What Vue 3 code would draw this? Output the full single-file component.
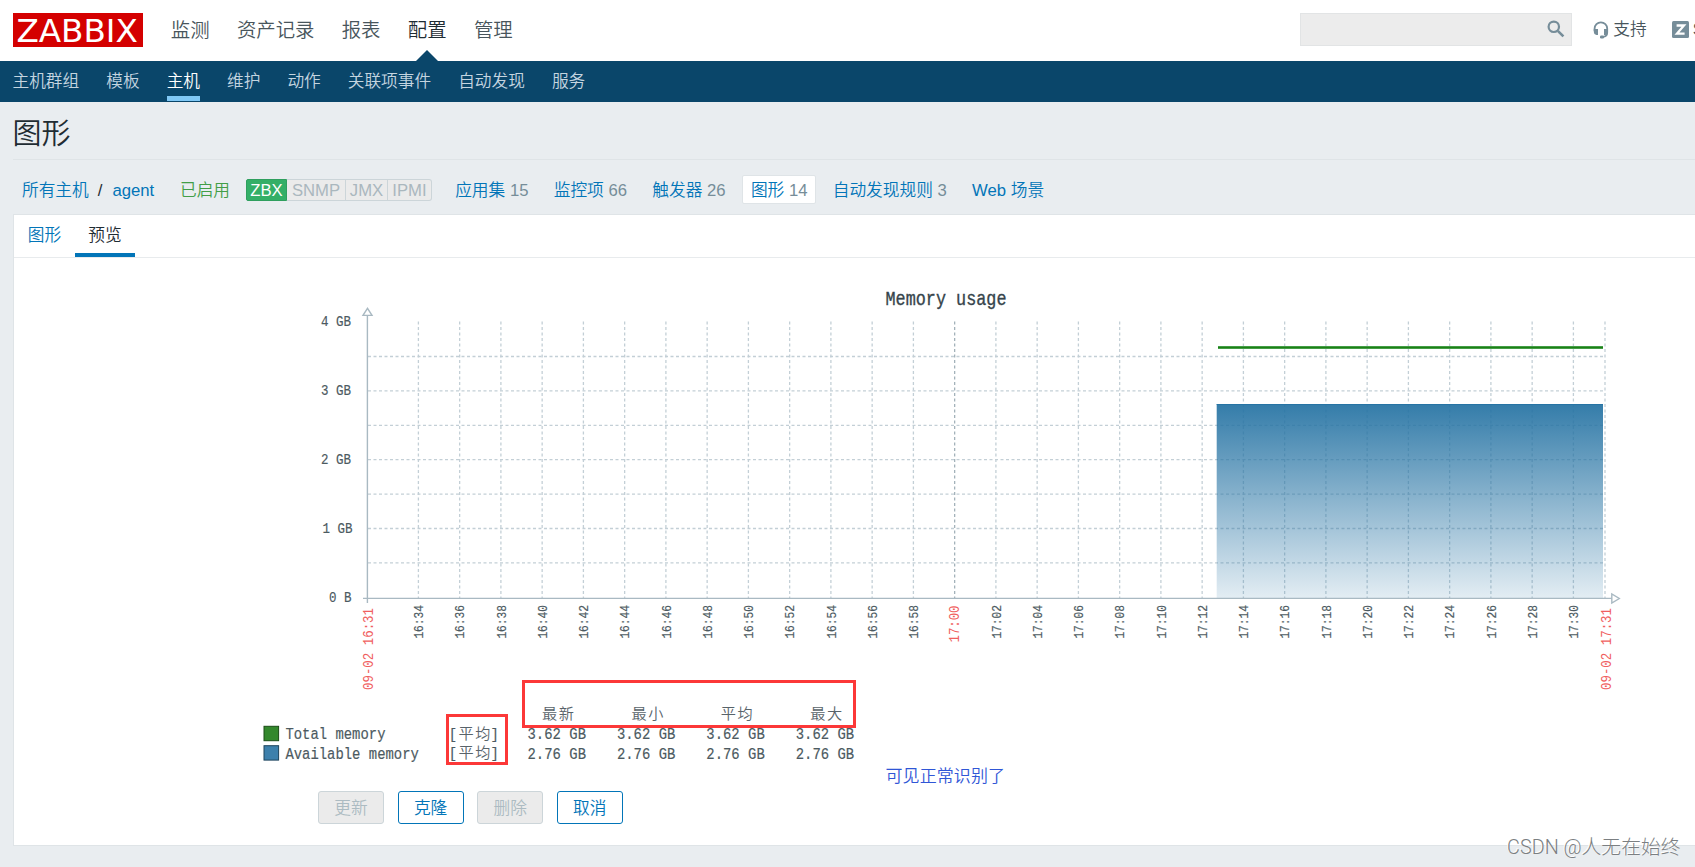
<template>
  <div class="page">
    <header class="header">
      <div class="logo">
        <svg width="130" height="34" viewBox="0 0 130 34">
          <text x="3.4" y="28.8" textLength="121.4" lengthAdjust="spacingAndGlyphs" class="logo-text">ZABBIX</text>
        </svg>
      </div>
      <nav class="main-nav">
        <a v-for="item in mainMenu" :key="item" :class="{ active: item === '配置' }">{{ item }}</a>
      </nav>
      <div class="search">
        <svg width="18" height="18" viewBox="0 0 18 18">
          <circle cx="6.8" cy="6.8" r="5.2" fill="none" stroke="#768d99" stroke-width="2.2" />
          <path d="M10.8 10.8 L16.4 16.4" stroke="#768d99" stroke-width="2.6" />
        </svg>
      </div>
      <a class="support">
        <svg width="16" height="18" viewBox="0 0 16 18">
          <path d="M1.6 10 V7.6 A6.1 6.1 0 0 1 14.2 7.6 V11.5 C14.2 14 12.5 15.6 9.8 15.9" fill="none" stroke="#768d99" stroke-width="1.8" />
          <path d="M0.8 8 H5 V14 H3.4 Q0.8 13.6 0.8 11 Z M15 8 H11 V14 H12.6 Q15 13.6 15 11 Z" fill="#768d99" />
          <rect x="7" y="14.6" width="4" height="2.8" rx="1.2" fill="#768d99" />
        </svg>
        <span>支持</span>
      </a>
      <a class="share">
        <svg width="17" height="17" viewBox="0 0 17 17">
          <rect width="17" height="17" rx="1.5" fill="#768d99" />
          <path d="M4.6 4.5 H12 L5 12.6 H12.6" fill="none" stroke="#fff" stroke-width="2.3" />
        </svg>
        <span>S</span>
      </a>
    </header>

    <nav class="sub-nav">
      <a v-for="item in subMenu" :key="item" :class="{ active: item === '主机' }">{{ item }}</a>
    </nav>

    <h1>图形</h1>

    <div class="filters">
      <span class="crumbs"><a>所有主机</a><i>/</i><a>agent</a></span>
      <span class="enabled">已启用</span>
      <span class="status">
        <b class="on">ZBX</b><b class="snmp">SNMP</b><b class="jmx">JMX</b><b class="ipmi">IPMI</b>
      </span>
      <a v-for="link in links" :key="link.name" class="link" :class="{ selected: link.name === '图形' }">
        {{ link.name }} <em v-if="link.count">{{ link.count }}</em>
      </a>
    </div>

    <main class="panel">
      <div class="tabs">
        <a>图形</a>
        <a class="current">预览</a>
      </div>

      <svg class="chart" width="1681" height="533" viewBox="14 258 1681 533">
        <defs>
          <linearGradient id="area" x1="0" y1="0" x2="0" y2="1">
            <stop offset="0" stop-color="#2774a4" stop-opacity="0.94" />
            <stop offset="1" stop-color="#2774a4" stop-opacity="0.13" />
          </linearGradient>
        </defs>

        <text class="mono title" transform="translate(885.5 304.5) scale(1 1.17)" textLength="121">Memory usage</text>

        <!-- grid -->
        <g class="grid">
          <line v-for="n in 7" :key="'h' + n" x1="368" x2="1605" :y1="gridY(n)" :y2="gridY(n)" />
          <line
            v-for="(t, i) in times" :key="'v' + t" :class="{ hour: t === '17:00' }"
            :x1="gridX(i)" :x2="gridX(i)" y1="321.5" y2="598"
          />
          <line x1="1605" x2="1605" y1="321.5" y2="598" />
        </g>

        <!-- data -->
        <rect x="1216.7" y="404" width="386.3" height="194" fill="url(#area)" />
        <line x1="1216.7" x2="1603" y1="404.5" y2="404.5" stroke="#2774a4" />
        <rect x="1218" y="346" width="385" height="3" fill="#429e47" />
        <rect x="1218" y="347" width="385" height="1" fill="#1f7f14" />

        <!-- axes -->
        <g class="axis">
          <path d="M367.4 315.5 V603 M363 598.4 H1612" />
          <path d="M363 315.4 H372 L367.5 308.4 Z M1611.8 594 V603 L1619.3 598.5 Z" class="arrow" />
        </g>

        <text
          v-for="l in yLabels" :key="l.text" class="mono ylabel" :textLength="l.w"
          :transform="`translate(${l.x} ${l.y}) scale(1 1.2)`"
        >{{ l.text }}</text>

        <text
          v-for="(t, i) in times" :key="t" class="mono" :class="t === '17:00' ? 'red' : 'time'"
          :textLength="t === '17:00' ? 37 : 33.5"
          :transform="`translate(${gridX(i) + (t === '17:00' ? 4.6 : 4.6)} ${t === '17:00' ? 642.5 : 638.6}) rotate(-90) scale(1 1.2)`"
        >{{ t }}</text>
        <text class="mono red" textLength="82" transform="translate(373.2 690) rotate(-90) scale(1 1.25)">09-02 16:31</text>
        <text class="mono red" textLength="82" transform="translate(1610.6 690) rotate(-90) scale(1 1.25)">09-02 17:31</text>

        <!-- legend -->
        <text v-for="(h, i) in heads" :key="h" class="kai" :x="542 + i * 89.4" y="719.3" textLength="32">{{ h }}</text>
        <g v-for="(row, r) in legend" :key="row.name">
          <rect x="264" :y="726.3 + r * 19.4" width="14.6" height="14.4" :fill="row.color" :stroke="row.border" />
          <text class="mono leg" :transform="`translate(285.4 ${739.2 + r * 19.4}) scale(1 1.17)`" :textLength="row.name.length * 8.34">{{ row.name }}</text>
          <text class="mono leg" :transform="`translate(448.8 ${739 + r * 19.4}) scale(1 1.1)`">[</text>
          <text class="kai" x="458.5" :y="738.8 + r * 19.4" textLength="32">平均</text>
          <text class="mono leg" :transform="`translate(490.5 ${739 + r * 19.4}) scale(1 1.1)`">]</text>
          <text
            v-for="n in 4" :key="n" class="mono leg" textLength="58.5"
            :transform="`translate(${438.1 + n * 89.4} ${739.2 + r * 19.4}) scale(1 1.17)`"
          >{{ row.value }}</text>
        </g>

        <!-- notes over the chart -->
        <g fill="none" stroke="#fc3838" stroke-width="3">
          <rect x="447.5" y="715.5" width="59" height="48" />
          <rect x="523.5" y="681.5" width="331" height="45" />
        </g>
        <text class="note" x="885.5" y="781.8" textLength="119.5">可见正常识别了</text>
      </svg>

      <div class="buttons">
        <button disabled>更新</button>
        <button>克隆</button>
        <button disabled>删除</button>
        <button>取消</button>
      </div>
    </main>

    <div class="watermark">CSDN @人无在始终</div>
  </div>
</template>

<script setup>
const mainMenu = ["监测", "资产记录", "报表", "配置", "管理"]
const subMenu = ["主机群组", "模板", "主机", "维护", "动作", "关联项事件", "自动发现", "服务"]

const links = [
  { name: "应用集", count: 15 },
  { name: "监控项", count: 66 },
  { name: "触发器", count: 26 },
  { name: "图形", count: 14 },
  { name: "自动发现规则", count: 3 },
  { name: "Web 场景" },
]

// 16:34 .. 17:30, every two minutes
const times = Array.from({ length: 29 }, (_, i) => {
  const m = 34 + i * 2
  return `${16 + Math.floor(m / 60)}:${String(m % 60).padStart(2, "0")}`
})

const gridX = (i) => 418.4 + i * 41.25
const gridY = (n) => 322.1 + n * 34.4

const yLabels = [
  { text: "4 GB", x: 321, y: 326.4, w: 30 },
  { text: "3 GB", x: 321, y: 395, w: 30 },
  { text: "2 GB", x: 321, y: 463.9, w: 30 },
  { text: "1 GB", x: 322.4, y: 532.7, w: 30 },
  { text: "0 B", x: 329, y: 601.5, w: 22.5 },
]

const heads = ["最新", "最小", "平均", "最大"]
const legend = [
  { name: "Total memory", value: "3.62 GB", color: "#33882c", border: "#1a4d16" },
  { name: "Available memory", value: "2.76 GB", color: "#3d80ac", border: "#1e445c" },
]
</script>

<style>
body {
  background: #e9edf0;
  overflow: hidden;
}
</style>

<style scoped>
.page {
  width: 1695px;
  height: 867px;
  overflow: hidden;
  position: relative;
  background: #e9edf0;
  color: #1f2c33;
  font-family: "Liberation Sans", "Noto Sans CJK SC", sans-serif;
  font-size: 16.7px;
  font-weight: 350;
}

.header {
  height: 61px;
  display: flex;
  align-items: flex-start;
  background: #fff;
  white-space: nowrap;
}

.header > * {
  flex-shrink: 0;
}

.logo {
  width: 130px;
  height: 34px;
  margin: 13px 0 0 13px;
  background: #d40000;
}

.logo svg {
  display: block;
  overflow: visible;
}

.logo-text {
  font: 32px "DejaVu Sans", sans-serif;
  fill: #fff;
}

.main-nav {
  display: flex;
  gap: 27.3px;
  width: 1129.5px;
  margin-left: 27.8px;
  font-size: 19.4px;
  line-height: 60px;
  color: #48555c;
}

.main-nav a {
  height: 61px;
  position: relative;
}

.main-nav .active {
  color: #1f2c33;
}

.main-nav .active::after {
  content: "";
  position: absolute;
  left: 8px;
  bottom: 0;
  border: 11px solid transparent;
  border-top: 0;
  border-bottom-color: #0a466a;
}

.search {
  box-sizing: border-box;
  width: 272px;
  height: 33px;
  margin-top: 13px;
  padding: 6px 6px 0 0;
  border: 1px solid #e2e4e5;
  background: #ececec;
  text-align: right;
}

.search svg {
  display: inline-block;
  vertical-align: top;
}

.support,
.share {
  display: flex;
  margin-top: 21px;
  line-height: 17px;
  color: #48555c;
}

.support {
  gap: 4px;
  margin-left: 21px;
  width: 79px;
}

.share {
  gap: 3.5px;
}

.sub-nav {
  display: flex;
  gap: 27px;
  height: 41px;
  padding-left: 12.5px;
  background: #0a466a;
  color: #c4d5e0;
  line-height: 42px;
}

.sub-nav a {
  box-sizing: border-box;
  height: 40px;
}

.sub-nav .active {
  color: #fff;
  border-bottom: 5px solid #80c8f5;
}

h1 {
  height: 57px;
  margin: 0 0 0 12.5px;
  border-bottom: 1px solid #dfe4e7;
  font-size: 29px;
  font-weight: 350;
  line-height: 65px;
}

.filters {
  display: flex;
  align-items: center;
  height: 54px;
  box-sizing: border-box;
  padding: 5px 0 0 22px;
  white-space: nowrap;
}

.filters a,
.tabs a {
  color: #0275b8;
}

.crumbs {
  width: 158px;
  margin-top: -2px;
}

.crumbs i {
  font-style: normal;
  margin: 0 10px 0 9px;
}

.enabled {
  width: 66px;
  margin-top: -1px;
  color: #429e47;
}

.status {
  display: flex;
  width: 186px;
  margin-right: 14.2px;
  box-sizing: border-box;
  height: 22px;
  line-height: 21px;
}

.status b {
  box-sizing: border-box;
  height: 22px;
  border: 1px solid #ccd5d9;
  border-left: 0;
  background: #ebebeb;
  color: #aab7be;
  font-weight: 400;
  text-align: center;
}

.status .on {
  width: 41px;
  border: 1px solid #2f9f5e;
  border-radius: 2px 0 0 2px;
  background: #34af67;
  color: #fff;
}

.status .snmp {
  width: 59px;
}

.status .jmx {
  width: 42px;
}

.status .ipmi {
  width: 44px;
  border-radius: 0 3px 3px 0;
}

.link {
  padding: 0 8px;
  margin-right: 7.3px;
  border: 1px solid transparent;
  border-radius: 2px;
  height: 27px;
  line-height: 29px;
}

.link.selected {
  background: #fff;
  border-color: #dfe4e7;
}

.link em {
  font-style: normal;
  color: #768d99;
}

.panel {
  box-sizing: border-box;
  height: 632px;
  margin-left: 13px;
  border: 1px solid #dfe4e7;
  border-right: 0;
  background: #fff;
}

.tabs {
  display: flex;
  height: 42px;
  border-bottom: 1px solid #e8ebed;
  line-height: 41px;
}

.tabs a {
  box-sizing: border-box;
  height: 42px;
  width: 61px;
  text-align: center;
}

.tabs .current {
  width: 60px;
  color: #1f2c33;
  border-bottom: 4px solid #0275b8;
}

.chart {
  display: block;
}

.mono {
  font-family: "Liberation Mono", monospace;
  font-weight: 400;
  fill: #4c5a61;
  stroke: #4c5a61;
  stroke-width: 0.15;
}

.mono.title {
  font-size: 16.8px;
  fill: #36444b;
  stroke: #36444b;
  stroke-width: 0.3;
}

.ylabel {
  font-size: 12.5px;
}

.time {
  font-size: 11.2px;
}

.mono.red {
  font-size: 12.4px;
  fill: #f0605e;
  stroke: none;
}

.leg {
  font-size: 13.9px;
}

.kai {
  font-family: "Noto Sans CJK SC", sans-serif;
  font-size: 15.2px;
  font-weight: 350;
  fill: #58636a;
}

.note {
  font-family: "Noto Sans CJK SC", sans-serif;
  font-size: 17px;
  font-weight: 350;
  fill: #3056d6;
}

.grid line {
  stroke: #c3cfd6;
  stroke-width: 1.3;
  stroke-dasharray: 3 2.5;
}

.grid .hour {
  stroke: #a3b2ba;
}

.axis path {
  fill: none;
  stroke: #a9b9c2;
  stroke-width: 1.4;
}

.axis .arrow {
  fill: #fff;
}

.buttons {
  display: flex;
  gap: 13.6px;
  margin-left: 304px;
}

button {
  box-sizing: border-box;
  width: 66px;
  height: 33px;
  padding: 0;
  border: 1px solid #0275b8;
  border-radius: 3px;
  background: #fff;
  color: #0275b8;
  font: inherit;
  line-height: 33px;
}

button:disabled {
  border-color: #ccd5d9;
  background: #ebebeb;
  color: #acbbc2;
}

.watermark {
  position: absolute;
  right: 14.5px;
  bottom: 4px;
  font-family: Roboto, "Noto Sans CJK SC", sans-serif;
  font-size: 19.8px;
  font-weight: 300;
  line-height: 30px;
  color: #7b7f82;
  text-shadow: -1px -1px 0 #fff;
}
</style>
